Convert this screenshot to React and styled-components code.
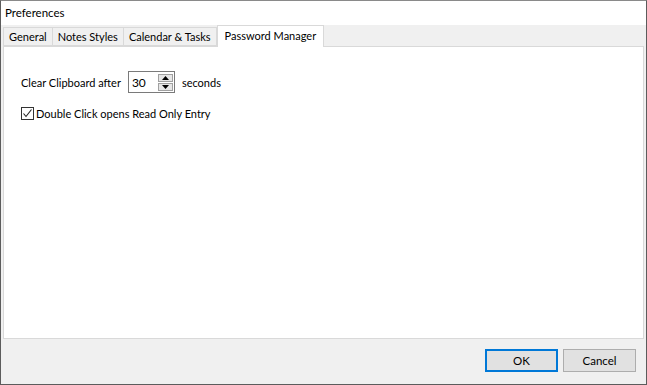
import React, { useState } from "react";
import styled, { createGlobalStyle } from "styled-components";

const GlobalStyle = createGlobalStyle`
  html, body {
    margin: 0;
    padding: 0;
    background: #ffffff;
  }
  body {
    font-family: Lato, "Noto Sans", sans-serif;
    font-size: 11px;
    color: #000;
  }
`;

const tabs = ["General", "Notes Styles", "Calendar & Tasks", "Password Manager"];

const Window = styled.div`
  width: 647px;
  height: 385px;
  box-sizing: border-box;
  border: 1px solid #5c5c5c;
  border-top-color: #8a8a8a;
  display: flex;
  flex-direction: column;
  background: #f0f0f0;
`;

const TitleBar = styled.div`
  flex-shrink: 0;
  height: 24px;
  background: #fff;
  padding: 0 0 1px 4px;
  box-sizing: border-box;
  display: flex;
  align-items: center;
  font-size: 11.5px;
`;

const Body = styled.div`
  flex: 1;
  display: flex;
  flex-direction: column;
  padding: 0 2px;
`;

const TabStrip = styled.div`
  flex-shrink: 0;
  display: flex;
  align-items: flex-end;
  height: 21px;
  position: relative;
  z-index: 1;
`;

const Tab = styled.div`
  height: ${(p) => (p.$active ? "22px" : "19px")};
  box-sizing: border-box;
  padding: ${(p) => (p.$active ? "0 7px 3px" : "0 5px")};
  margin-bottom: ${(p) => (p.$active ? "-1px" : "0")};
  border: 1px solid #d9d9d9;
  border-bottom: ${(p) => (p.$active ? "none" : "1px solid #d9d9d9")};
  border-left: ${(p) => (p.$first || p.$active ? "1px solid #d9d9d9" : "none")};
  background: ${(p) => (p.$active ? "#fff" : "#f0f0f0")};
  display: flex;
  align-items: center;
  white-space: nowrap;
`;

const Panel = styled.div`
  flex-shrink: 0;
  height: 293px;
  box-sizing: border-box;
  background: #fff;
  border: 1px solid #d9d9d9;
  padding: 24px 17px;
  display: flex;
  flex-direction: column;
  gap: 14px;
`;

const Row = styled.div`
  display: flex;
  align-items: center;
  gap: 7px;
`;

const SpinBox = styled.div`
  width: 47px;
  height: 22px;
  box-sizing: border-box;
  border: 1px solid #7a7a7a;
  display: flex;
  align-items: center;
  justify-content: space-between;
  padding: 0 1px 0 3px;
  font-size: 12px;
`;

const SpinButtons = styled.div`
  display: flex;
  flex-direction: column;
  gap: 1px;
`;

const SpinButton = styled.div`
  width: 15px;
  height: 8px;
  box-sizing: border-box;
  border: 1px solid #a0a0a0;
  background: #e6e6e6;
  display: flex;
  align-items: center;
  justify-content: center;
`;

const Check = styled.label`
  display: flex;
  align-items: center;
  gap: 2px;
`;

const CheckBox = styled.span`
  width: 13px;
  height: 13px;
  box-sizing: border-box;
  border: 1px solid #333;
  background: #fff;
  display: flex;
  align-items: center;
  justify-content: center;
`;

const Footer = styled.div`
  flex: 1;
  display: flex;
  justify-content: flex-end;
  align-items: center;
  gap: 5px;
  padding: 0 8px 2px 0;
`;

const Button = styled.button`
  width: 73px;
  height: 23px;
  box-sizing: border-box;
  font-family: inherit;
  font-size: 11.5px;
  background: #e1e1e1;
  border: ${(p) => (p.$primary ? "2px solid #0078d7" : "1px solid #adadad")};
  padding: 0;
  color: #000;
`;

const Arrow = ({ up }) => (
  <svg width="7" height="4" viewBox="0 0 7 4">
    <polygon points={up ? "0,4 7,4 3.5,0" : "0,0 7,0 3.5,4"} fill="#000" />
  </svg>
);

export default function App() {
  const [seconds] = useState(30);
  return (
    <>
      <GlobalStyle />
      <Window>
        <TitleBar>Preferences</TitleBar>
        <Body>
          <TabStrip>
            {tabs.map((t, i) => (
              <Tab key={t} $first={i === 0} $active={i === tabs.length - 1}>
                {t}
              </Tab>
            ))}
          </TabStrip>
          <Panel>
            <Row>
              <span>Clear Clipboard after</span>
              <SpinBox>
                <span>{seconds}</span>
                <SpinButtons>
                  <SpinButton>
                    <Arrow up />
                  </SpinButton>
                  <SpinButton>
                    <Arrow />
                  </SpinButton>
                </SpinButtons>
              </SpinBox>
              <span>seconds</span>
            </Row>
            <Check>
              <CheckBox>
                <svg width="11" height="11" viewBox="0 0 11 11">
                  <polyline
                    points="1.5,5.5 4,8.5 9.5,1.5"
                    fill="none"
                    stroke="#222"
                    strokeWidth="1.1"
                  />
                </svg>
              </CheckBox>
              <span>Double Click opens Read Only Entry</span>
            </Check>
          </Panel>
          <Footer>
            <Button $primary>OK</Button>
            <Button>Cancel</Button>
          </Footer>
        </Body>
      </Window>
    </>
  );
}
